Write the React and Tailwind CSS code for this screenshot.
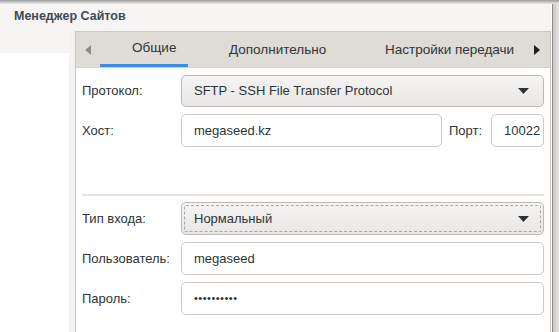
import React from 'react';

function Arrow({ dir = 'down', className = '' }) {
  if (dir === 'left') {
    return (
      <svg width="6" height="10" viewBox="0 0 6 10" className={className}>
        <path d="M6 0 L0 5 L6 10 Z" fill="currentColor" />
      </svg>
    );
  }
  if (dir === 'right') {
    return (
      <svg width="6" height="10" viewBox="0 0 6 10" className={className}>
        <path d="M0 0 L6 5 L0 10 Z" fill="currentColor" />
      </svg>
    );
  }
  return (
    <svg width="11" height="6" viewBox="0 0 11 6" className={className}>
      <path d="M0 0 L11 0 L5.5 6 Z" fill="currentColor" />
    </svg>
  );
}

function Combo({ value, focused }) {
  return (
    <div
      className={`h-full flex items-center justify-between pl-[12px] pr-[14px] rounded-[5px] border border-[#bdb8b2] bg-gradient-to-b from-[#f5f4f3] to-[#e9e7e5] ${
        focused ? 'outline-dashed outline-1 outline-offset-[-4px] outline-[#a8a6a3]' : ''
      }`}
    >
      <span>{value}</span>
      <Arrow className="text-[#2e3436]" />
    </div>
  );
}

function Field({ value, className = '' }) {
  return (
    <div className={`h-full flex items-center pl-[12px] rounded-[5px] border border-[#cdc8c3] bg-white overflow-hidden whitespace-nowrap ${className}`}>
      {value}
    </div>
  );
}

export default function App() {
  return (
    <div className="w-[559px] h-[332px] overflow-hidden relative bg-[#f6f5f4] text-[13px] text-[#2e3436] font-['Liberation_Sans',sans-serif]">
      {/* window shadow on top */}
      <div className="h-[4px] bg-gradient-to-b from-[#9c9c9c] to-[#ecebea]" />

      <div className="flex h-[328px]">
        <div className="flex-1 flex flex-col">
          {/* header */}
          <div className="h-[26px] flex items-center pl-[14px] pb-[2px] font-bold text-[12.5px] text-[#3e4a55]">
            Менеджер Сайтов
          </div>

          <div className="flex flex-1">
            {/* left list panel */}
            <div className="w-[69px] mt-[23px] bg-white" />
            <div className="w-[6px] bg-[#f3f2f1]" />

            {/* notebook */}
            <div className="w-[476px] mt-[1px] border border-[#cbc6c1] border-b-0 bg-white flex flex-col">
              <div className="h-[36px] bg-[#dfdcd8] flex items-stretch border-b border-[#d4d0cb] text-[13.5px]">
                <div className="w-[24px] flex items-center justify-center text-[#8f8d8a]">
                  <Arrow dir="left" />
                </div>
                <div className="w-[88px] flex flex-col">
                  <div className="flex-1 flex items-center pl-[32px] pt-[1px]">Общие</div>
                  <div className="h-[3px] w-full bg-[#3a8ee6]" />
                </div>
                <div className="w-[172px] flex items-center pl-[41px] pt-[1px]">Дополнительно</div>
                <div className="w-[165px] flex items-center pl-[25px] pt-[1px] whitespace-nowrap overflow-hidden">
                  Настройки передачи
                </div>
                <div className="flex-1 flex items-center justify-center pr-[2px] text-[#1e1e1e]">
                  <Arrow dir="right" />
                </div>
              </div>

              <div className="pl-[6px] pr-[6px] pt-[7px]">
                <div className="grid grid-cols-[99px_1fr] gap-y-[7px]">
                  <div className="h-[32px] flex items-center">Протокол:</div>
                  <div className="h-[32px]">
                    <Combo value="SFTP - SSH File Transfer Protocol" />
                  </div>

                  <div className="h-[33px] flex items-center">Хост:</div>
                  <div className="h-[33px] flex items-center">
                    <Field value="megaseed.kz" className="w-[261px]" />
                    <span className="ml-[7px] mr-[9px]">Порт:</span>
                    <Field value="10022" className="flex-1 pl-[10px]" />
                  </div>
                </div>

                <div className="h-[2px] mt-[47px] bg-[#e6e4e1]" />

                <div className="grid grid-cols-[99px_1fr] gap-y-[7px] mt-[6px]">
                  <div className="h-[33px] flex items-center">Тип входа:</div>
                  <div className="h-[33px]">
                    <Combo value="Нормальный" focused />
                  </div>

                  <div className="h-[33px] flex items-center">Пользователь:</div>
                  <div className="h-[33px]">
                    <Field value="megaseed" />
                  </div>

                  <div className="h-[33px] flex items-center">Пароль:</div>
                  <div className="h-[33px]">
                    <Field value="••••••••••" className="text-[11px] tracking-[0.5px]" />
                  </div>
                </div>
              </div>
            </div>
          </div>
        </div>

        {/* right window edge */}
        <div className="w-[8px] flex">
          <div className="w-[1px] bg-white" />
          <div className="w-[1px] bg-[#8e8c8a]" />
          <div className="flex-1 bg-gradient-to-r from-[#c9c8c6] to-[#e6e5e4]" />
        </div>
      </div>
    </div>
  );
}
